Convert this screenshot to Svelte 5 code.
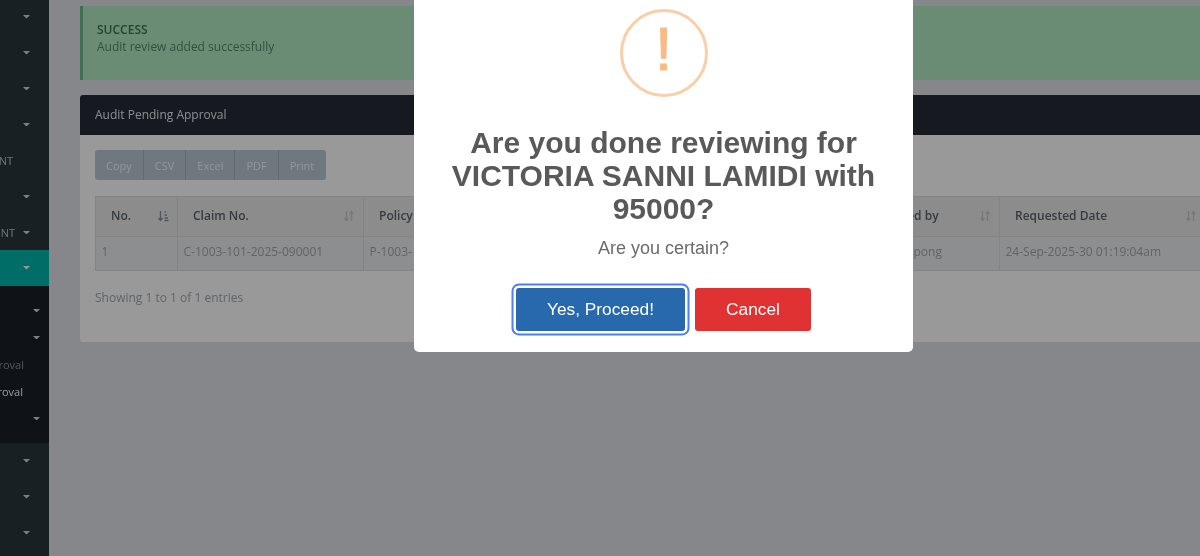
<script>
	const topMenu = [
		{ text: '' }, { text: '' }, { text: '' }, { text: '' },
		{ text: 'NT', noCaret: true }, { text: '' }, { text: 'NT' }
	];
	const subMenu = [
		{ text: '' }, { text: '' },
		{ text: 'Pending Approval', noCaret: true, muted: true },
		{ text: 'Audit Approval', noCaret: true, current: true },
		{ text: '' }
	];
	const buttons = ['Copy', 'CSV', 'Excel', 'PDF', 'Print'];
	const columns = [
		{ label: 'No.', width: 82, active: true },
		{ label: 'Claim No.', width: 186 },
		{ label: 'Policy No.', width: 481 },
		{ label: 'Requested by', width: 155 },
		{ label: 'Requested Date', width: 206 }
	];
	const row = ['1', 'C-1003-101-2025-090001', 'P-1003-', 'Kwame Ampong', '24-Sep-2025-30 01:19:04am'];
</script>

{#snippet caret()}
	<svg class="caret" width="8" height="4" viewBox="0 0 8 4"><path d="M0 0h8L4 4z" fill="currentColor" /></svg>
{/snippet}

<div class="page">
	<nav class="sidebar">
		{#each topMenu as item}
			<div class="item">
				<span>{item.text}</span>
				{#if !item.noCaret}{@render caret()}{/if}
			</div>
		{/each}
		<div class="item open">{@render caret()}</div>
		<div class="submenu">
			{#each subMenu as item}
				<div class="subitem" class:muted={item.muted} class:current={item.current}>
					{#if item.noCaret}
						<span>{item.text}</span>
					{:else}
						{@render caret()}
					{/if}
				</div>
			{/each}
		</div>
		<div class="item">{@render caret()}</div>
		<div class="item">{@render caret()}</div>
		<div class="item">{@render caret()}</div>
	</nav>

	<main class="content">
		<div class="alert">
			<strong>SUCCESS</strong>
			<p>Audit review added successfully</p>
		</div>

		<section class="card">
			<header>Audit Pending Approval</header>
			<div class="card-body">
				<div class="btn-group">
					{#each buttons as b}<button>{b}</button>{/each}
				</div>
				<table>
					<thead>
						<tr>
							{#each columns as c}
								<th style="width: {c.width}px; min-width: {c.width}px">
									<div class="th">
										<span>{c.label}</span>
										<svg class="sort" class:active={c.active} width="12" height="12" viewBox="0 0 12 12">
											{#if c.active}
												<path d="M3.5 1v9M1.5 8l2 2.5 2-2.5M7.5 2h1.5M7.5 5h2.5M7.5 8h3.5M7.5 10.5h4" fill="none" stroke="currentColor" stroke-width="1.4" />
											{:else}
												<path d="M3.5 1v9M1.5 8l2 2.5 2-2.5M8.5 11V2M6.5 4l2-2.5 2 2.5" fill="none" stroke="currentColor" stroke-width="1.4" />
											{/if}
										</svg>
									</div>
								</th>
							{/each}
						</tr>
					</thead>
					<tbody>
						<tr>
							{#each row as cell}<td>{cell}</td>{/each}
						</tr>
					</tbody>
				</table>
				<div class="info">Showing 1 to 1 of 1 entries</div>
			</div>
		</section>
	</main>

	<div class="overlay">
		<div class="modal">
			<div class="icon"><span>!</span></div>
			<h2>Are you done reviewing for VICTORIA SANNI LAMIDI with 95000?</h2>
			<p class="sub">Are you certain?</p>
			<div class="actions">
				<button class="yes">Yes, Proceed!</button>
				<button class="cancel">Cancel</button>
			</div>
		</div>
	</div>
</div>

<style>
	:global(body) {
		margin: 0;
		overflow: hidden;
	}

	.page {
		position: relative;
		display: flex;
		width: 1200px;
		height: 556px;
		overflow: hidden;
		background: #dee1e6;
		font-family: 'Open Sans', sans-serif;
		filter: blur(0.35px);
	}

	.sidebar {
		flex: 0 0 49px;
		width: 49px;
		margin-top: -1px;
		margin-right: 1px;
		background: #2b363d;
		color: #d3d8dc;
		font-size: 11px;
		overflow: hidden;
	}

	.item {
		display: flex;
		align-items: center;
		justify-content: flex-end;
		gap: 8px;
		height: 35.9px;
		padding-right: 19px;
		white-space: nowrap;
	}

	.item span {
		color: #b9c0c6;
	}

	.item:nth-child(5) {
		padding-right: 36px;
	}

	.caret {
		width: 7px;
		height: 3.5px;
	}

	.open {
		background: #00b7aa;
		color: #fff;
	}

	.submenu {
		padding: 11px 0;
		background: #191f26;
	}

	.subitem {
		display: flex;
		align-items: center;
		justify-content: flex-end;
		height: 27px;
		padding-right: 9px;
		white-space: nowrap;
		font-size: 11px;
	}

	.subitem.muted {
		padding-right: 25px;
		color: #8d9298;
	}

	.subitem.current {
		padding-right: 26px;
		color: #fff;
	}

	.content {
		flex: 1;
		min-width: 0;
		padding: 6px 0 0 30px;
	}

	.alert {
		box-sizing: border-box;
		height: 74px;
		padding: 15px 14px;
		border-left: 3px solid #69b78e;
		background: #b1e9c3;
		color: #50896a;
		font-size: 12px;
		line-height: 17px;
	}

	.alert strong {
		display: block;
		color: #3f7250;
		font-weight: 600;
	}

	.alert p {
		margin: 0;
	}

	.card {
		margin-top: 15px;
		width: 1150px;
		height: 247px;
		border-radius: 3px;
		background: #fff;
		overflow: hidden;
	}

	.card header {
		height: 40px;
		padding-left: 15px;
		background: #262b34;
		color: #e4e8ee;
		font-size: 12px;
		line-height: 39px;
	}

	.card-body {
		padding: 15px;
	}

	.btn-group {
		display: flex;
		width: max-content;
		border-radius: 3px;
		overflow: hidden;
	}

	.btn-group button {
		height: 30px;
		padding: 0 11px;
		border: 0;
		border-right: 1px solid #a5b2bc;
		background: #b9c8d4;
		color: #eef9ff;
		font: 11px 'Open Sans', sans-serif;
	}

	.btn-group button:last-child {
		border-right: 0;
		padding-right: 12px;
	}

	table {
		margin-top: 16px;
		border-collapse: collapse;
		table-layout: fixed;
		font-size: 12px;
	}

	th {
		box-sizing: border-box;
		height: 40px;
		padding: 0 8px 2px 15px;
		border: 1px solid #dadcdd;
		background: #e9eaeb;
		color: #5c6169;
		font-weight: 600;
		text-align: left;
	}

	.th {
		display: flex;
		align-items: center;
		justify-content: space-between;
	}

	.sort {
		color: #c5c9cc;
	}

	.sort.active {
		color: #8a9097;
	}

	td {
		height: 34px;
		box-sizing: border-box;
		padding: 0 6px 5px 5.5px;
		border: 1px solid #dadcdd;
		background: #ebedef;
		color: #9fa7ad;
		white-space: nowrap;
		overflow: hidden;
	}

	.info {
		margin-top: 18px;
		color: #a0a7b0;
		font-size: 12px;
	}

	.overlay {
		position: absolute;
		inset: 0;
		background: rgba(0, 0, 0, 0.4);
	}

	.modal {
		position: absolute;
		left: 414px;
		top: -31px;
		box-sizing: border-box;
		width: 499px;
		height: 383px;
		padding-top: 40px;
		border-radius: 5px;
		background: #fff;
		font-family: 'Liberation Sans', Arial, sans-serif;
		text-align: center;
	}

	.icon {
		box-sizing: border-box;
		display: flex;
		align-items: center;
		justify-content: center;
		width: 88px;
		height: 88px;
		margin: 0 auto;
		padding-bottom: 8px;
		border: 3.5px solid #facea8;
		border-radius: 50%;
		color: #f8bb86;
		font-size: 62px;
		line-height: 1;
		-webkit-text-stroke: 1px #f8bb86;
	}

	h2 {
		margin: 29px 0 0;
		padding: 0 20px;
		color: #595959;
		font-size: 30px;
		font-weight: 700;
		line-height: 33px;
	}

	.sub {
		margin: 12px 0 0;
		color: #6b6b6b;
		font-size: 18px;
		line-height: 22px;
	}

	.actions {
		display: flex;
		justify-content: center;
		gap: 10px;
		margin-top: 29px;
	}

	.actions button {
		height: 43px;
		border: 0;
		border-radius: 3px;
		color: #fff;
		font: 17.3px 'Liberation Sans', Arial, sans-serif;
	}

	.yes {
		width: 169px;
		background: #2769ac;
		box-shadow: 0 0 0 2.5px #fff, 0 0 0 4.5px #4f7bff;
	}

	.cancel {
		width: 116px;
		background: #e03232;
	}
</style>
